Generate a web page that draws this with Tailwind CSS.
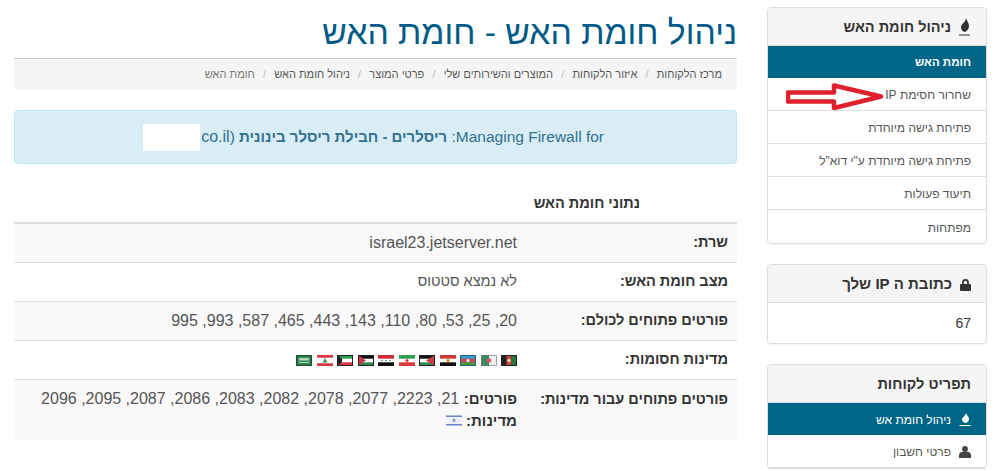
<!DOCTYPE html>
<html lang="he" dir="rtl">
<head>
<meta charset="utf-8">
<script src="https://cdn.jsdelivr.net/npm/@tailwindcss/browser@4"></script>
</head>
<body class="bg-white font-['Liberation_Sans',Arial,sans-serif] text-[14px] text-[#333] overflow-hidden">
<div class="flex h-[471px] overflow-hidden pr-[11px] pl-[14px] gap-[30px]">
  <!-- sidebar -->
  <aside class="w-[220px] shrink-0 pt-[7px] flex flex-col gap-[20px]">
    <section class="border border-[#ddd] rounded-[4px] shadow-[0_1px_1px_rgba(0,0,0,0.05)] relative">
      <h3 class="h-[38px] pt-[2px] bg-[#f5f5f5] border-b border-[#ddd] rounded-t-[3px] flex items-center gap-[7px] px-[15px] text-[14.500px] font-bold text-[#333]">
        <svg class="w-[13px] h-[20px] shrink-0" viewBox="0 0 13 20" fill="#333"><path d="M8 0C8.500 2.500 11 4.500 11 8c0 3-2 5-4 6-2.300-.5-4-2.200-4-4.800C3 6 7.500 4.500 8 0z"/><rect x="1" y="16.500" width="11" height="1"/></svg>
        <span>ניהול חומת האש</span>
      </h3>
      <ul class="text-[12px] text-[#555]">
        <li class="h-[32px] pt-[2px] bg-[#006687] text-white font-bold text-[11.500px] flex items-center px-[15px]">חומת האש</li>
        <li class="h-[33px] pt-[2px] border-b border-[#ddd] flex items-center px-[15px]">שחרור חסימת IP</li>
        <li class="h-[33px] pt-[2px] border-b border-[#ddd] flex items-center px-[15px]">פתיחת גישה מיוחדת</li>
        <li class="h-[33px] pt-[2px] border-b border-[#ddd] flex items-center px-[15px]">פתיחת גישה מיוחדת ע"י דוא"ל</li>
        <li class="h-[33px] pt-[2px] border-b border-[#ddd] flex items-center px-[15px]">תיעוד פעולות</li>
        <li class="h-[33px] pt-[2px] flex items-center px-[15px]">מפתחות</li>
      </ul>
      <svg class="absolute left-[18px] top-[75px] w-[100px] h-[30px]" viewBox="0 0 100 30" fill="#fff" stroke="#e0202c" stroke-width="4.500" stroke-linejoin="round"><path d="M2 9.500H48V2.500L95 13.500L48 25V18.500H2z"/></svg>
    </section>
    <section class="border border-[#ddd] rounded-[4px] shadow-[0_1px_1px_rgba(0,0,0,0.05)]">
      <h3 class="h-[38px] pt-[2px] bg-[#f5f5f5] border-b border-[#ddd] rounded-t-[3px] flex items-center gap-[8px] px-[15px] text-[15px] font-bold text-[#333]">
        <svg class="w-[11px] h-[12px] shrink-0" viewBox="0 0 12 13" fill="#333"><path d="M2.300 5.500V3.700a3.700 3.700 0 0 1 7.400 0v1.800H11a1 1 0 0 1 1 1V12a1 1 0 0 1-1 1H1a1 1 0 0 1-1-1V6.500a1 1 0 0 1 1-1zM4.200 5.500h3.600V3.700a1.800 1.800 0 0 0-3.600 0z"/></svg>
        <span>כתובת ה IP שלך</span>
      </h3>
      <div class="h-[40px] flex items-center px-[15px] text-[#333]">67</div>
    </section>
    <section class="border border-[#ddd] rounded-[4px]">
      <h3 class="h-[38px] pt-[2px] bg-[#f5f5f5] border-b border-[#ddd] rounded-t-[3px] flex items-center px-[15px] text-[14.500px] font-bold text-[#333]">תפריט לקוחות</h3>
      <ul class="text-[12px] text-[#555]">
        <li class="h-[32px] pt-[2px] bg-[#006687] text-white flex items-center gap-[8px] px-[15px]">
          <svg class="w-[12px] h-[14px] shrink-0" viewBox="0 0 12 14" fill="#fff"><path d="M7 0C7.300 2 10 3.500 10 6c0 2-1.500 3.500-3.500 4C4.500 9.600 3 8.300 3 6.500 3 4.500 6.500 3 7 0z"/><rect x=".5" y="12" width="11" height="1"/></svg>
          <span>ניהול חומת אש</span></li>
        <li class="h-[33px] pt-[2px] border-b border-[#ddd] flex items-center gap-[8px] px-[15px]">
          <svg class="w-[12px] h-[12px] shrink-0" viewBox="0 0 12 12" fill="#444"><circle cx="6" cy="3" r="2.900"/><path d="M0 12v-3C0 7.200 1.800 5.800 3.500 5.800h5C10.200 5.800 12 7.200 12 9v3z"/></svg>
          <span>פרטי חשבון</span></li>
      </ul>
    </section>
  </aside>

  <!-- main -->
  <main class="flex-1 min-w-0">
    <h1 class="h-[58px] pt-[12px] text-[33.700px] leading-[40px] text-[#005a87] font-normal">ניהול חומת האש - חומת האש</h1>
    <nav class="h-[32px] bg-[#f5f5f5] border-t border-[#ccc] rounded-b-[4px] flex items-center px-[15px] text-[11px] text-[#555] gap-[8.200px]">
      <span>מרכז הלקוחות</span><span class="text-[#bbb]">/</span>
      <span>איזור הלקוחות</span><span class="text-[#bbb]">/</span>
      <span>המוצרים והשירותים שלי</span><span class="text-[#bbb]">/</span>
      <span>פרטי המוצר</span><span class="text-[#bbb]">/</span>
      <span>ניהול חומת האש</span><span class="text-[#bbb]">/</span>
      <span class="text-[#777]">חומת האש</span>
    </nav>
    <div class="mt-[20px] h-[54px] bg-[#d9edf7] border border-[#bce8f1] rounded-[4px] flex items-center pr-[132px] text-[15.500px] text-[#31708f]">
      <p>Managing Firewall for: <strong class="text-[15px]">ריסלרים - חבילת ריסלר בינונית</strong> (<bdi dir="ltr" class="inline-flex items-center align-middle"><span class="w-[57px] h-[27px] bg-white -mr-[3px] relative"></span><span class="text-[16px]">.co.il</span></bdi></p>
    </div>
    <h2 class="mt-[29px] h-[29px] pr-[97px] text-[14.500px] font-bold text-[#333] leading-[20px]">נתוני חומת האש</h2>
    <table class="w-full border-t-2 border-[#ddd] text-[16px] text-[#555]">
      <tbody>
        <tr class="h-[39px] bg-[#f9f9f9] border-b border-[#ddd]">
          <th class="w-[212px] pr-[9px] text-right font-bold text-[#333] text-[14.500px] align-middle">שרת:</th>
          <td class="pr-[8px] text-right" dir="rtl"><span dir="ltr">israel23.jetserver.net</span></td>
        </tr>
        <tr class="h-[39px] border-b border-[#ddd]">
          <th class="pr-[9px] text-right font-bold text-[#333] text-[14.500px]">מצב חומת האש:</th>
          <td class="pr-[8px] text-[14.500px]">לא נמצא סטטוס</td>
        </tr>
        <tr class="h-[39px] bg-[#f9f9f9] border-b border-[#ddd]">
          <th class="pr-[9px] text-right font-bold text-[#333] text-[14.500px]">פורטים פתוחים לכולם:</th>
          <td class="pr-[8px]">20, 25, 53, 80, 110, 143, 443, 465, 587, 993, 995</td>
        </tr>
        <tr class="h-[39px] border-b border-[#ddd]">
          <th class="pr-[9px] text-right font-bold text-[#333] text-[14.500px]">מדינות חסומות:</th>
          <td class="pr-[8px]">
            <div class="flex gap-[4.500px] pt-[2px]">
              <svg class="w-[16px] h-[11px]" viewBox="0 0 16 11"><rect width="16" height="11" fill="#222"/><rect x="5.500" width="5" height="11" fill="#c8473c"/><rect x="10.500" width="5.500" height="11" fill="#1f7a42"/><circle cx="8" cy="5.500" r="1.800" fill="#f0c8c0"/><rect x=".5" y=".5" width="15" height="10" fill="none" stroke="#222"/></svg>
              <svg class="w-[16px] h-[11px]" viewBox="0 0 16 11"><rect width="16" height="11" fill="#eee"/><rect width="8" height="11" fill="#3c8a5c"/><circle cx="8" cy="5.500" r="2.200" fill="#d8506a"/><rect x=".5" y=".5" width="15" height="10" fill="none" stroke="#777" stroke-opacity=".6"/></svg>
              <svg class="w-[16px] h-[11px]" viewBox="0 0 16 11"><rect width="16" height="11" fill="#3f9c35"/><rect width="16" height="7.300" fill="#c84a55"/><rect width="16" height="3.700" fill="#3a9ecc"/><circle cx="8" cy="5.500" r="1.500" fill="#fff"/><rect x=".5" y=".5" width="15" height="10" fill="none" stroke="#2d5f80"/></svg>
              <svg class="w-[16px] h-[11px]" viewBox="0 0 16 11"><rect width="16" height="11" fill="#111"/><rect width="16" height="7.300" fill="#fff"/><rect width="16" height="3.700" fill="#d43a3a"/><circle cx="8" cy="5.500" r="1.500" fill="#c09300"/></svg>
              <svg class="w-[16px] h-[11px]" viewBox="0 0 16 11"><rect width="16" height="11" fill="#2f8a54"/><rect width="16" height="7.300" fill="#fff"/><rect width="16" height="3.700" fill="#111"/><path d="M16 0L7 5.500L16 11z" fill="#ce3b46"/><rect x=".5" y=".5" width="15" height="10" fill="none" stroke="#222"/></svg>
              <svg class="w-[16px] h-[11px]" viewBox="0 0 16 11"><rect width="16" height="11" fill="#da3a3a"/><rect width="16" height="7.300" fill="#fff"/><rect width="16" height="3.700" fill="#2f9f50"/><circle cx="8" cy="5.500" r="1.500" fill="#da3a3a"/></svg>
              <svg class="w-[16px] h-[11px]" viewBox="0 0 16 11"><rect width="16" height="11" fill="#111"/><rect width="16" height="7.300" fill="#fff"/><rect width="16" height="3.700" fill="#ce2b36"/><circle cx="4" cy="5.500" r=".8" fill="#2f8a54"/><circle cx="8" cy="5.500" r=".8" fill="#2f8a54"/><circle cx="12" cy="5.500" r=".8" fill="#2f8a54"/></svg>
              <svg class="w-[16px] h-[11px]" viewBox="0 0 16 11"><rect width="16" height="11" fill="#2f8a54"/><rect width="16" height="7.300" fill="#fff"/><rect width="16" height="3.700" fill="#111"/><path d="M0 0L8 5.500L0 11z" fill="#ce3b46"/><rect x=".5" y=".5" width="15" height="10" fill="none" stroke="#222"/></svg>
              <svg class="w-[16px] h-[11px]" viewBox="0 0 16 11"><rect width="16" height="11" fill="#d8383f"/><rect width="16" height="7.300" fill="#fff"/><rect width="16" height="3.700" fill="#2f9f50"/><path d="M0 0L5 3.700V7.300L0 11z" fill="#222"/><rect x=".5" y=".5" width="15" height="10" fill="none" stroke="#222"/></svg>
              <svg class="w-[16px] h-[11px]" viewBox="0 0 16 11"><rect width="16" height="11" fill="#d8383f"/><rect y="2.700" width="16" height="5.600" fill="#fff"/><path d="M8 3L10.500 7.500H5.500z" fill="#2f9f50"/></svg>
              <svg class="w-[16px] h-[11px]" viewBox="0 0 16 11"><rect width="16" height="11" fill="#2f8450"/><rect x="3" y="3" width="10" height="2.500" fill="#b5d5bd"/><rect x="3" y="7" width="10" height="1" fill="#b5d5bd"/><rect x=".5" y=".5" width="15" height="10" fill="none" stroke="#1f4a2c"/></svg>
            </div>
          </td>
        </tr>
        <tr class="h-[61px] bg-[#f9f9f9]">
          <th class="pr-[9px] pt-[9px] text-right font-bold text-[#333] text-[14.500px] align-top">פורטים פתוחים עבור מדינות:</th>
          <td class="pr-[8px] pt-[8px] align-top leading-[22px]">
            <div><strong class="text-[15px] text-[#333]">פורטים:</strong> 21, 2223, 2077, 2078, 2082, 2083, 2086, 2087, 2095, 2096</div>
            <div class="flex items-center gap-[4px]"><strong class="text-[15px] text-[#333]">מדינות:</strong>
              <svg class="w-[16px] h-[11px]" viewBox="0 0 16 11"><rect width="16" height="11" fill="#eef1f9"/><rect y=".5" width="16" height="1.500" fill="#6a86c8"/><rect y="9" width="16" height="1.500" fill="#6a86c8"/><path d="M8 3.200L9.700 6.300H6.300zM8 7.500L6.300 4.500H9.700z" fill="#6a86c8"/></svg>
            </div>
          </td>
        </tr>
      </tbody>
    </table>
  </main>
</div>
</body>
</html>
